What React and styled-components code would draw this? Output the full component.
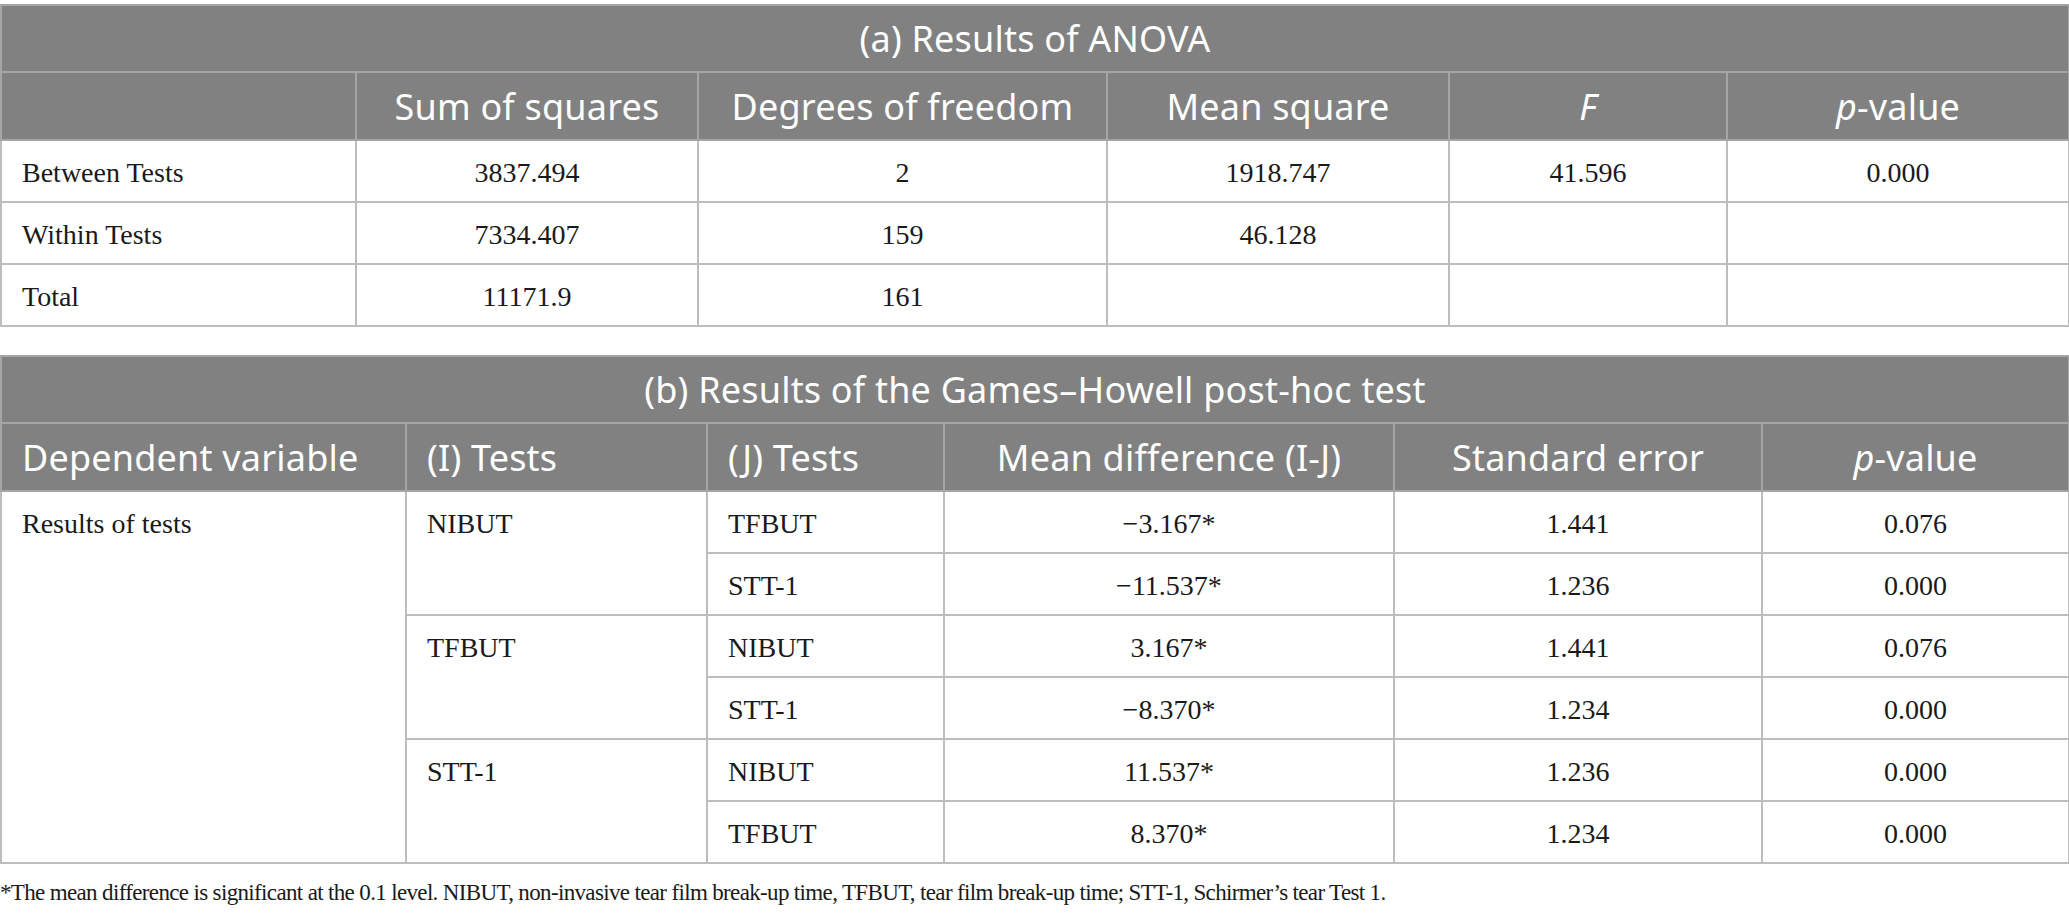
import React from "react";
import styled, { createGlobalStyle } from "styled-components";

const GlobalStyle = createGlobalStyle`
  html, body {
    margin: 0;
    padding: 0;
    background: #ffffff;
  }
  body {
    font-family: "Liberation Serif", "Times New Roman", serif;
    color: #1a1a1a;
  }
`;

const Page = styled.div`
  width: 2068px;
  padding-top: 4px;
  display: flex;
  flex-direction: column;
  gap: 28px;
`;

const Table = styled.table`
  width: 2068px;
  border-collapse: collapse;
  table-layout: fixed;
`;

const TitleCell = styled.th`
  height: 65px;
  padding: 0;
  background: #808180;
  border: 2px solid #a4a5a4;
  color: #ffffff;
  font-family: "Noto Sans", "Open Sans", sans-serif;
  font-weight: 400;
  font-size: 36px;
  letter-spacing: 0.2px;
  text-align: center;
  vertical-align: middle;
`;

const HeadCell = styled.th`
  height: 66px;
  padding: 0 20px;
  background: #808180;
  border: 2px solid #a4a5a4;
  color: #ffffff;
  font-family: "Noto Sans", "Open Sans", sans-serif;
  font-weight: 400;
  font-size: 36px;
  letter-spacing: 0.2px;
  text-align: ${(p) => p.$align || "center"};
  vertical-align: middle;
  white-space: nowrap;
`;

const Cell = styled.td`
  height: 57px;
  padding: 3px 20px 0;
  border: 2px solid #bdbdbd;
  font-size: 28px;
  line-height: 57px;
  color: #1a1a1a;
  text-align: ${(p) => p.$align || "center"};
  vertical-align: top;
  white-space: nowrap;
`;

const Ital = styled.i`
  font-style: italic;
`;

const Footnote = styled.p`
  margin: -12px 0 0;
  font-size: 23px;
  letter-spacing: -0.65px;
  color: #1a1a1a;
`;

const anovaCols = [355, 342, 409, 342, 278, 342];
const postCols = [405, 301, 237, 450, 368, 307];

const anovaRows = [
  ["Between Tests", "3837.494", "2", "1918.747", "41.596", "0.000"],
  ["Within Tests", "7334.407", "159", "46.128", "", ""],
  ["Total", "11171.9", "161", "", "", ""],
];

const postGroups = [
  {
    test: "NIBUT",
    rows: [
      ["TFBUT", "\u22123.167*", "1.441", "0.076"],
      ["STT-1", "\u221211.537*", "1.236", "0.000"],
    ],
  },
  {
    test: "TFBUT",
    rows: [
      ["NIBUT", "3.167*", "1.441", "0.076"],
      ["STT-1", "\u22128.370*", "1.234", "0.000"],
    ],
  },
  {
    test: "STT-1",
    rows: [
      ["NIBUT", "11.537*", "1.236", "0.000"],
      ["TFBUT", "8.370*", "1.234", "0.000"],
    ],
  },
];

const Cols = ({ widths }) => (
  <colgroup>
    {widths.map((w, i) => (
      <col key={i} style={{ width: w }} />
    ))}
  </colgroup>
);

const AnovaTable = () => (
  <Table>
    <Cols widths={anovaCols} />
    <thead>
      <tr>
        <TitleCell colSpan={6}>(a) Results of ANOVA</TitleCell>
      </tr>
      <tr>
        <HeadCell />
        <HeadCell>Sum of squares</HeadCell>
        <HeadCell>Degrees of freedom</HeadCell>
        <HeadCell>Mean square</HeadCell>
        <HeadCell>
          <Ital>F</Ital>
        </HeadCell>
        <HeadCell>
          <Ital>p</Ital>-value
        </HeadCell>
      </tr>
    </thead>
    <tbody>
      {anovaRows.map((row) => (
        <tr key={row[0]}>
          {row.map((v, i) => (
            <Cell key={i} $align={i === 0 ? "left" : "center"}>
              {v}
            </Cell>
          ))}
        </tr>
      ))}
    </tbody>
  </Table>
);

const PostHocTable = () => (
  <Table>
    <Cols widths={postCols} />
    <thead>
      <tr>
        <TitleCell colSpan={6}>
          (b) Results of the Games{"\u2013"}Howell post-hoc test
        </TitleCell>
      </tr>
      <tr>
        <HeadCell $align="left">Dependent variable</HeadCell>
        <HeadCell $align="left">(I) Tests</HeadCell>
        <HeadCell $align="left">(J) Tests</HeadCell>
        <HeadCell>Mean difference (I-J)</HeadCell>
        <HeadCell>Standard error</HeadCell>
        <HeadCell>
          <Ital>p</Ital>-value
        </HeadCell>
      </tr>
    </thead>
    <tbody>
      {postGroups.map((g, gi) =>
        g.rows.map((r, ri) => (
          <tr key={`${gi}-${ri}`}>
            {gi === 0 && ri === 0 && (
              <Cell $align="left" rowSpan={6}>
                Results of tests
              </Cell>
            )}
            {ri === 0 && (
              <Cell $align="left" rowSpan={2}>
                {g.test}
              </Cell>
            )}
            <Cell $align="left">{r[0]}</Cell>
            <Cell>{r[1]}</Cell>
            <Cell>{r[2]}</Cell>
            <Cell>{r[3]}</Cell>
          </tr>
        ))
      )}
    </tbody>
  </Table>
);

export default function App() {
  return (
    <>
      <GlobalStyle />
      <Page>
        <AnovaTable />
        <PostHocTable />
        <Footnote>
          *The mean difference is significant at the 0.1 level. NIBUT,
          non-invasive tear film break-up time, TFBUT, tear film break-up time;
          STT-1, Schirmer{"\u2019"}s tear Test 1.
        </Footnote>
      </Page>
    </>
  );
}
